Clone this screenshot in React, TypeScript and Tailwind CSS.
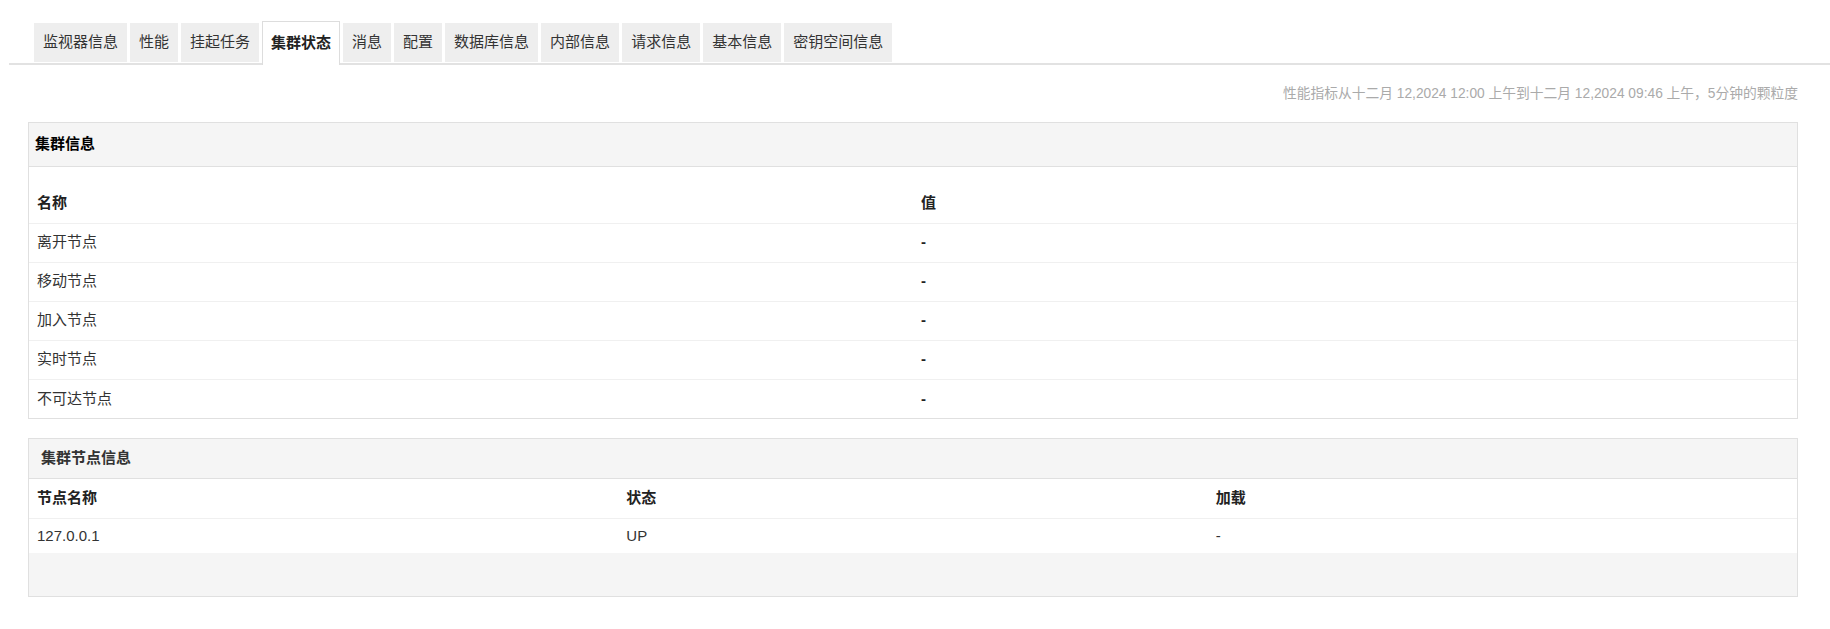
import React from "react";

const tabs = ["监视器信息", "性能", "挂起任务", "集群状态", "消息", "配置", "数据库信息", "内部信息", "请求信息", "基本信息", "密钥空间信息"];
const activeTab = "集群状态";

const clusterRows = ["离开节点", "移动节点", "加入节点", "实时节点", "不可达节点"];

const nodes = [{ name: "127.0.0.1", status: "UP", load: "-" }];

const App = () => {
    return (
        <div className="min-h-screen bg-white text-[#333] font-['Liberation_Sans','Noto_Sans_CJK_SC',sans-serif]">
            {/* tab bar */}
            <div className="ml-[9px] flex items-end gap-[3px] border-b-2 border-[#e2e2e2] pl-[25px] pt-[21px]">
                {tabs.map((tab) =>
                    tab === activeTab ? (
                        <div key={tab} className="relative z-10 -mb-[2px] flex h-[44px] items-center border border-b-0 border-[#dddddd] bg-white px-2 text-[15px] font-bold text-[#222]">
                            {tab}
                        </div>
                    ) : (
                        <div key={tab} className="mb-[1px] flex h-[39px] items-center border border-[#eeeeee] bg-[#eeeeee] px-2 text-[15px] text-[#333]">
                            {tab}
                        </div>
                    )
                )}
            </div>

            <div className="pl-[28px] pr-[32px]">
                <p className="mt-[19px] text-right text-[13.75px] leading-5 text-[#aaaaaa]">
                    性能指标从十二月 12,2024 12:00 上午到十二月 12,2024 09:46 上午，5分钟的颗粒度
                </p>

                {/* cluster info */}
                <div className="mt-[18px] border border-[#e0e0e0]">
                    <div className="flex h-[44px] items-center border-b border-[#e0e0e0] bg-[#f5f5f5] px-[6px] text-[15px] font-bold text-black">
                        集群信息
                    </div>
                    <div className="pt-[17px]">
                        <table className="w-full table-fixed border-collapse text-[15px]">
                            <thead>
                                <tr className="h-[39px] border-b border-[#f0f0f0]">
                                    <th className="px-2 text-left font-bold text-[#222]">名称</th>
                                    <th className="px-2 text-left font-bold text-[#222]">值</th>
                                </tr>
                            </thead>
                            <tbody>
                                {clusterRows.map((row, i) => (
                                    <tr key={row} className={`h-[39px] ${i < clusterRows.length - 1 ? "border-b border-[#f0f0f0]" : ""}`}>
                                        <td className="px-2 text-[#333]">{row}</td>
                                        <td className="px-2 font-bold text-[#222]">-</td>
                                    </tr>
                                ))}
                            </tbody>
                        </table>
                    </div>
                </div>

                {/* cluster nodes */}
                <div className="mt-[19px] border border-[#e0e0e0]">
                    <div className="flex h-[40px] items-center border-b border-[#e0e0e0] bg-[#f5f5f5] px-[12px] text-[15px] font-semibold text-[#333]">
                        集群节点信息
                    </div>
                    <table className="w-full table-fixed border-collapse text-[15px]">
                        <thead>
                            <tr className="h-[39px] border-b border-[#f0f0f0]">
                                <th className="px-2 text-left font-bold text-[#222]">节点名称</th>
                                <th className="px-2 text-left font-bold text-[#222]">状态</th>
                                <th className="px-2 text-left font-bold text-[#222]">加载</th>
                            </tr>
                        </thead>
                        <tbody>
                            {nodes.map((node) => (
                                <tr key={node.name} className="h-[35px]">
                                    <td className="px-2">{node.name}</td>
                                    <td className="px-2">{node.status}</td>
                                    <td className="px-2">{node.load}</td>
                                </tr>
                            ))}
                        </tbody>
                    </table>
                    <div className="h-[43px] bg-[#f5f5f5]" />
                </div>
            </div>
        </div>
    );
};

export default App;
